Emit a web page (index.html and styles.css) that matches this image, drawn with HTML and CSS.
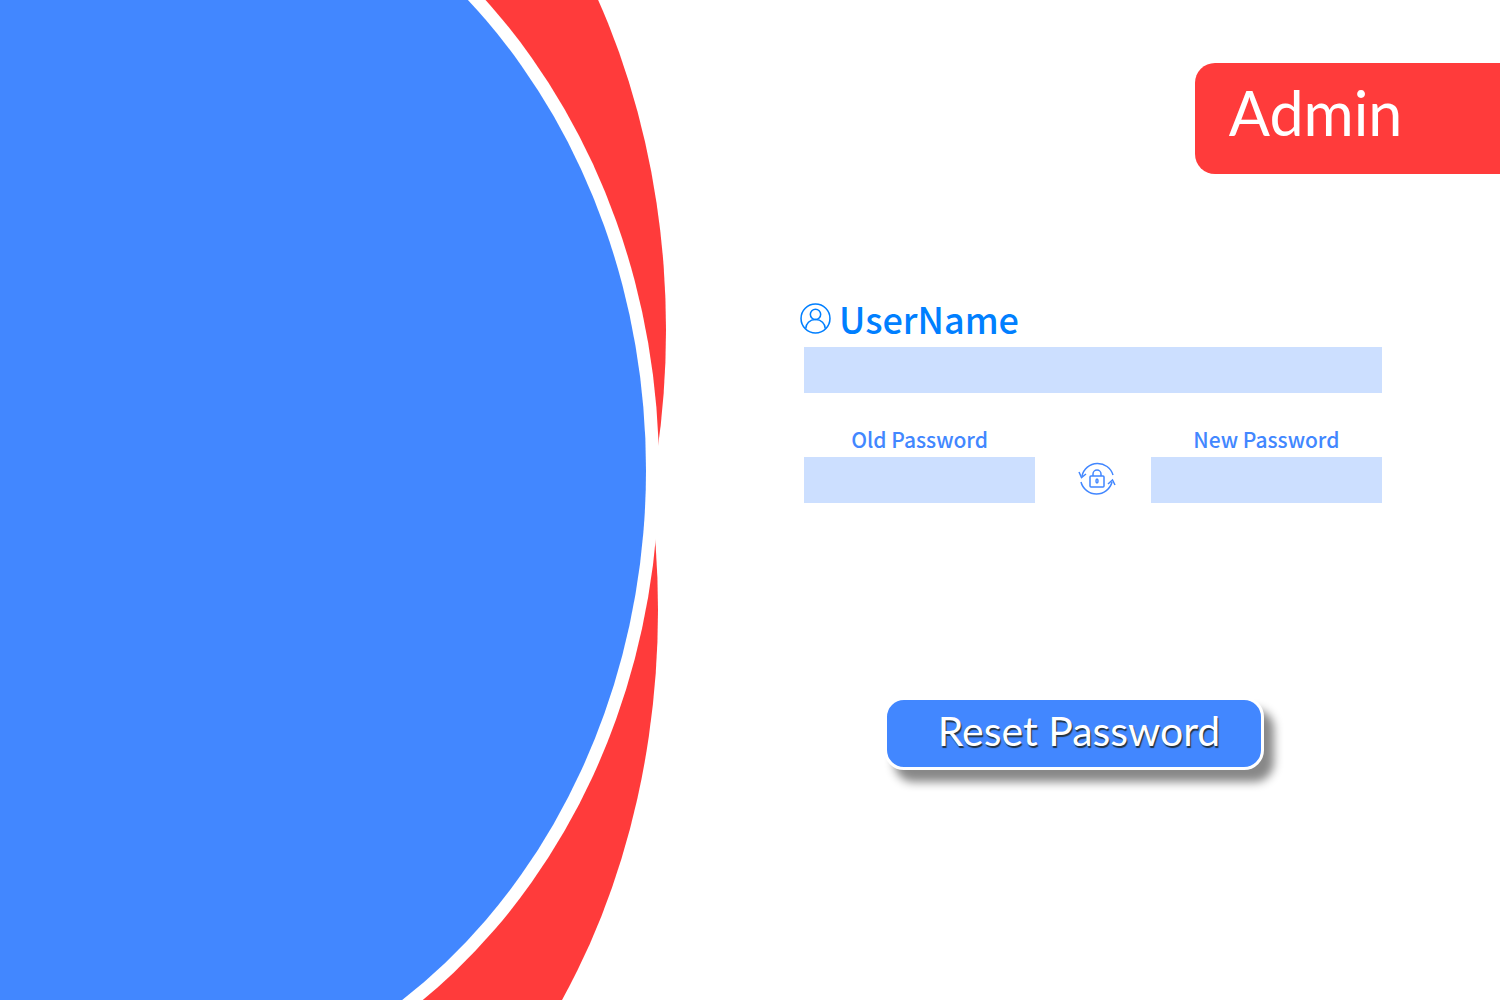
FILE: index.html
```html
<!DOCTYPE html>
<html lang="en">
<head>
<meta charset="utf-8">
<meta name="viewport" content="width=device-width, initial-scale=1">
<title>Admin - Reset Password</title>
<link rel="stylesheet" href="styles.css">
</head>
<body>
<div class="page">
  <svg class="art" viewBox="0 0 675 1000" preserveAspectRatio="xMinYMid slice" aria-hidden="true">
    <ellipse class="art-red" cx="176" cy="330" rx="490" ry="650"/>
    <ellipse class="art-red" cx="178" cy="610" rx="480" ry="650"/>
    <ellipse class="art-white" cx="98" cy="470" rx="561" ry="650"/>
    <ellipse class="art-blue" cx="98" cy="470" rx="548" ry="637"/>
  </svg>
  <main class="content">
    <h1 class="banner">Admin</h1>
    <form class="form">
      <div class="field">
        <div class="user-row">
          <svg class="user-icon" viewBox="0 0 30 30" aria-hidden="true">
            <circle cx="15" cy="15" r="14"/>
            <circle cx="15" cy="11" r="5"/>
            <path d="M5.500 25c0-5 4-9 9.500-9s9.500 4 9.500 9"/>
          </svg>
          <label class="user-label" for="username">UserName</label>
        </div>
        <input class="input" id="username" type="text">
      </div>
      <div class="passwords">
        <div class="field">
          <label class="label" for="old-password">Old Password</label>
          <input class="input" id="old-password" type="password">
        </div>
        <svg class="lock-icon" viewBox="0 0 38 34" aria-hidden="true">
          <path d="M4 14A16 16 0 0 1 35 13M34 20A16 16 0 0 1 3 20"/>
          <path d="M1 10l2.500 5.500L8 12M30 22l4.500-4L37 23"/>
          <rect x="12" y="14" width="14" height="11" rx="1"/>
          <path d="M15 14v-2a4 4 0 0 1 8 0v2"/>
          <ellipse cx="19" cy="19" rx="1" ry="2"/>
        </svg>
        <div class="field">
          <label class="label" for="new-password">New Password</label>
          <input class="input" id="new-password" type="password">
        </div>
      </div>
      <button class="reset" type="button">Reset Password</button>
    </form>
  </main>
</div>
</body>
</html>
```
FILE: styles.css
```css
* {
  box-sizing: border-box;
}

body {
  margin: 0;
  background: #fff;
  font-family: "Noto Sans CJK SC", "Noto Sans", sans-serif;
}

.page {
  display: grid;
  grid-template-columns: 45% 1fr;
  min-height: 100vh;
}

.art {
  width: 100%;
  height: 100%;
}

.art-red {
  fill: #ff3b3b;
}

.art-white {
  fill: #fff;
}

.art-blue {
  fill: #4287ff;
}

.content {
  display: flex;
  flex-direction: column;
  padding: 63px 0 40px;
}

.banner {
  align-self: flex-end;
  width: 37%;
  margin: 0;
  padding: 14px 34px 25px;
  border-radius: 20px 0 0 20px;
  background: #ff3b3b;
  color: #fff;
  font: 400 61px/72px Lato, sans-serif;
}

.form {
  display: flex;
  flex-direction: column;
  margin: 122px 118px 0 129px;
}

.field {
  display: flex;
  flex-direction: column;
}

.user-row {
  display: flex;
  align-items: center;
  gap: 8px;
  height: 44px;
  margin: 0 0 7px -4px;
}

.user-icon {
  width: 31px;
  height: 31px;
  fill: none;
  stroke: #007fff;
  stroke-width: 1.5;
}

.user-label {
  color: #007fff;
  font-size: 36px;
  font-weight: 500;
  line-height: 44px;
}

.input {
  width: 100%;
  height: 46px;
  padding: 0 12px;
  border: 0;
  border-radius: 0;
  background: #ccdfff;
  color: #4287ff;
  font: inherit;
  font-size: 21px;
}

.passwords {
  display: grid;
  grid-template-columns: 2fr 1fr 2fr;
  margin-top: 32px;
}

.label {
  margin-bottom: 4px;
  color: #4287ff;
  font-size: 21px;
  font-weight: 500;
  line-height: 28px;
  text-align: center;
}

.lock-icon {
  align-self: end;
  justify-self: center;
  width: 38px;
  height: 34px;
  margin: 0 0 7px 9px;
  fill: none;
  stroke: #4287ff;
  stroke-width: 1.5;
}

.reset {
  align-self: center;
  width: 380px;
  max-width: 100%;
  margin: 194px 38px 0 0;
  padding: 7px 0 12px 10px;
  border: 3px solid #fff;
  border-radius: 20px;
  background: #4287ff;
  box-shadow: 10px 12px 10px #888;
  color: #fff;
  font: 400 41px/48px Lato, sans-serif;
  text-shadow: 1px 2px 1px #234;
}
```
